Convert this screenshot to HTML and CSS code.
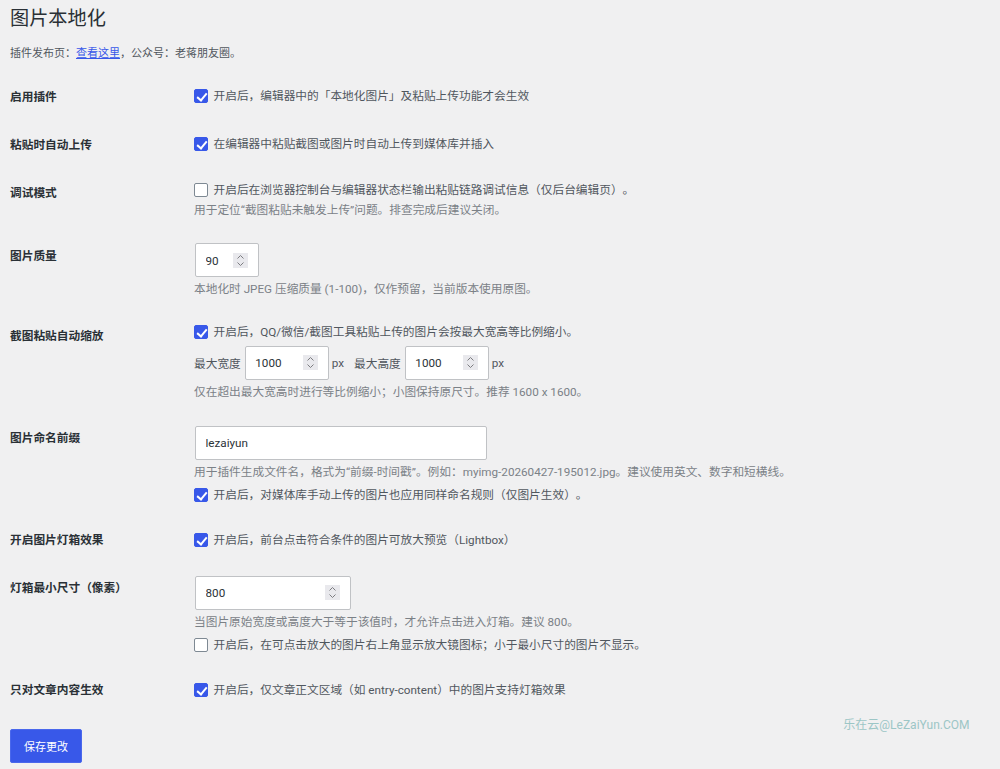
FILE: index.html
```html
<!DOCTYPE html>
<html lang="zh-CN">
<head>
<meta charset="utf-8">
<title>图片本地化</title>
<link rel="stylesheet" href="styles.css">
</head>
<body>
<main class="wrap">
  <h1 class="title">图片本地化</h1>
  <p class="intro">插件发布页：<a href="#">查看这里</a>，公众号：老蒋朋友圈。</p>
  <form class="form">
    <div class="row">
      <div class="label">启用插件</div>
      <div class="field"><label class="check single"><input type="checkbox" checked>开启后，编辑器中的「本地化图片」及粘贴上传功能才会生效</label></div>
    </div>
    <div class="row">
      <div class="label">粘贴时自动上传</div>
      <div class="field"><label class="check single"><input type="checkbox" checked>在编辑器中粘贴截图或图片时自动上传到媒体库并插入</label></div>
    </div>
    <div class="row">
      <div class="label">调试模式</div>
      <div class="field">
        <label class="check"><input type="checkbox">开启后在浏览器控制台与编辑器状态栏输出粘贴链路调试信息（仅后台编辑页）。</label>
        <p class="desc flush">用于定位“截图粘贴未触发上传”问题。排查完成后建议关闭。</p>
      </div>
    </div>
    <div class="row">
      <div class="label">图片质量</div>
      <div class="field">
        <div class="num w64"><input type="text" value="90"><svg class="spin" viewBox="0 0 15 15"><rect width="15" height="15"/><path d="M4.5 5.5 7.5 2.5 10.5 5.5M4.5 9.5 7.5 12.5 10.5 9.5"/></svg></div>
        <p class="desc">本地化时 JPEG 压缩质量 (1-100)，仅作预留，当前版本使用原图。</p>
      </div>
    </div>
    <div class="row">
      <div class="label">截图粘贴自动缩放</div>
      <div class="field">
        <label class="check tight"><input type="checkbox" checked>开启后，QQ/微信/截图工具粘贴上传的图片会按最大宽高等比例缩小。</label>
        <div class="sizes">
          <span class="cap">最大宽度</span>
          <div class="num w84"><input type="text" value="1000"><svg class="spin" viewBox="0 0 15 15"><rect width="15" height="15"/><path d="M4.5 5.5 7.5 2.5 10.5 5.5M4.5 9.5 7.5 12.5 10.5 9.5"/></svg></div>
          <span class="unit">px</span>
          <span class="cap second">最大高度</span>
          <div class="num w84"><input type="text" value="1000"><svg class="spin" viewBox="0 0 15 15"><rect width="15" height="15"/><path d="M4.5 5.5 7.5 2.5 10.5 5.5M4.5 9.5 7.5 12.5 10.5 9.5"/></svg></div>
          <span class="unit">px</span>
        </div>
        <p class="desc">仅在超出最大宽高时进行等比例缩小；小图保持原尺寸。推荐 1600 x 1600。</p>
      </div>
    </div>
    <div class="row">
      <div class="label">图片命名前缀</div>
      <div class="field">
        <div class="num w292"><input type="text" value="lezaiyun"></div>
        <p class="desc">用于插件生成文件名，格式为“前缀-时间戳”。例如：myimg-20260427-195012.jpg。建议使用英文、数字和短横线。</p>
        <label class="check after"><input type="checkbox" checked>开启后，对媒体库手动上传的图片也应用同样命名规则（仅图片生效）。</label>
      </div>
    </div>
    <div class="row">
      <div class="label">开启图片灯箱效果</div>
      <div class="field"><label class="check single"><input type="checkbox" checked>开启后，前台点击符合条件的图片可放大预览（Lightbox）</label></div>
    </div>
    <div class="row">
      <div class="label">灯箱最小尺寸（像素）</div>
      <div class="field">
        <div class="num w156"><input type="text" value="800"><svg class="spin" viewBox="0 0 15 15"><rect width="15" height="15"/><path d="M4.5 5.5 7.5 2.5 10.5 5.5M4.5 9.5 7.5 12.5 10.5 9.5"/></svg></div>
        <p class="desc">当图片原始宽度或高度大于等于该值时，才允许点击进入灯箱。建议 800。</p>
        <label class="check after"><input type="checkbox">开启后，在可点击放大的图片右上角显示放大镜图标；小于最小尺寸的图片不显示。</label>
      </div>
    </div>
    <div class="row">
      <div class="label">只对文章内容生效</div>
      <div class="field"><label class="check single"><input type="checkbox" checked>开启后，仅文章正文区域（如 entry-content）中的图片支持灯箱效果</label></div>
    </div>
    <button class="save" type="button">保存更改</button>
  </form>
</main>
<div class="watermark">乐在云@LeZaiYun.COM</div>
</body>
</html>
```
FILE: styles.css
```css
* { box-sizing: border-box; }
html, body { margin: 0; height: 100%; }
body {
  background: #f0f0f1;
  color: #50575e;
  font-family: Roboto, "Noto Sans CJK SC", sans-serif;
  font-size: 11.7px;
  text-spacing-trim: space-all;
  overflow: hidden;
  position: relative;
}
.wrap { padding: 6px 0 0 10px; }
.title {
  margin: 0;
  font-size: 19.2px;
  line-height: 26px;
  font-weight: 400;
  color: #2a3036;
}
.intro {
  margin: 11px 0 6.5px;
  padding-top: 1px;
  font-size: 11px;
  line-height: 20px;
  color: #50575e;
}
.intro a { color: #3858e9; }
.row { display: flex; }
.label {
  width: 184px;
  flex: none;
  padding-top: 19px;
  font-weight: 700;
  line-height: 15px;
  color: #2a3036;
}
.field { flex: 1; padding: 13.5px 0 10.5px; }
.check { display: flex; align-items: center; line-height: 20px; white-space: nowrap; }
.check.single { line-height: 24px; }
.check.tight { line-height: 18.5px; }
.check.after { margin-top: 3px; margin-bottom: -1px; }
.check input {
  appearance: none;
  width: 14px;
  height: 14px;
  flex: none;
  margin: 0 5.5px 0 0;
  background: #fff;
  border: 1px solid #7e8993;
  border-radius: 2px;
  position: relative;
}
.check input:checked { background: #3858e9; border-color: #3858e9; }
.check input:checked::after {
  content: "";
  position: absolute;
  left: 3.6px;
  top: 1px;
  width: 4px;
  height: 8px;
  border: solid #fff;
  border-width: 0 2px 2px 0;
  transform: rotate(40deg);
}
.desc {
  margin: 2px 0 0;
  line-height: 20px;
  color: #7b8187;
  white-space: nowrap;
}
.desc.flush { margin: 0 0 -1px; }
.num {
  display: flex;
  align-items: center;
  height: 34px;
  margin-left: 1px;
  padding-right: 10px;
  background: #fff;
  border: 1px solid #c0c2c5;
  border-radius: 2px;
}
.num input {
  flex: 1;
  min-width: 0;
  height: 100%;
  padding: 1px 0 0 9.5px;
  border: 0;
  outline: 0;
  background: transparent;
  font: inherit;
  color: #2c3338;
}
.w64 { width: 64px; }
.w84 { width: 84px; }
.w156 { width: 156px; }
.w292 { width: 292px; }
.spin { width: 15px; height: 15px; flex: none; }
.spin rect { fill: #e9e9ed; }
.spin path { fill: none; stroke: #7c7c80; stroke-width: 1; }
.sizes { display: flex; align-items: center; margin-top: 4px; }
.sizes .num { margin-left: 4px; }
.sizes .unit { margin-left: 3px; }
.sizes .second { margin-left: 10px; }
.save {
  display: block;
  width: 72px;
  height: 34px;
  margin-top: 16.5px;
  padding: 0;
  background: #3858e9;
  border: 1px solid #4a68ec;
  border-radius: 2px;
  color: #fff;
  font-family: inherit;
  font-size: 11px;
}
.watermark {
  position: absolute;
  right: 30.5px;
  top: 715.5px;
  color: #9cc6c6;
  font-family: Roboto, "Noto Sans CJK SC", sans-serif;
  font-size: 12px;
  line-height: 18px;
  white-space: nowrap;
}
```
